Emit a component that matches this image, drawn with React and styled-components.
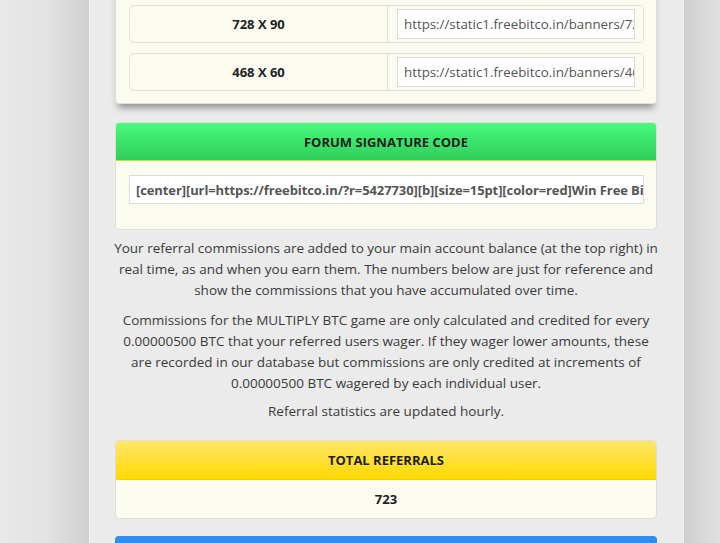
import React from "react";
import styled, { createGlobalStyle } from "styled-components";

const Global = createGlobalStyle`
  html, body { margin: 0; padding: 0; height: 100%; }
  body {
    font-family: "Open Sans", "Liberation Sans", sans-serif;
    background: linear-gradient(to right, #e9e9e9 0px, #e2e2e2 50px, #cfcfcf 89px, #cfcfcf 684px, #d2d2d2 690px, #e0e0e0 720px);
    overflow: hidden;
  }
`;

const Page = styled.div`
  display: flex;
  padding-left: 89px;
  height: 543px;
`;

const Column = styled.main`
  width: 595px;
  flex-shrink: 0;
  box-sizing: border-box;
  padding: 0 26px 0 25px;
  background: #ebebeb;
  border-left: 1px solid #f2f2f2;
  border-right: 1px solid #f0f0f0;
  display: flex;
  flex-direction: column;
  overflow: hidden;
  & > * { flex-shrink: 0; }
`;

const Card = styled.section`
  background: #fcfbef;
  border: 1px solid #e2e0d2;
  border-radius: 4px;
  box-sizing: border-box;
  overflow: hidden;
  margin-top: ${(p) => p.$mt || 0}px;
  box-shadow: ${(p) => (p.$deep ? "0 7px 7px -3px rgba(0,0,0,0.38)" : "none")};
`;

const BannerList = styled.div`
  display: flex;
  flex-direction: column;
  gap: 10px;
  padding: 24px 12px 12px 13px;
`;

const BannerRow = styled.div`
  display: grid;
  grid-template-columns: 258px minmax(0, 1fr);
  height: 38px;
  border: 1px solid #e3e1d3;
  border-radius: 4px;
  box-sizing: border-box;
`;

const SizeCell = styled.div`
  display: flex;
  align-items: center;
  justify-content: center;
  font-weight: 700;
  font-size: 13px;
  color: #222;
  border-right: 1px solid #e3e1d3;
`;

const UrlCell = styled.div`
  display: flex;
  align-items: center;
  min-width: 0;
  padding: 0 8px 0 9px;
`;

const Field = styled.div`
  flex: 1;
  min-width: 0;
  height: ${(p) => p.$h || 30}px;
  box-sizing: border-box;
  background: #fff;
  border: 1px solid #dcdcdc;
  display: flex;
  align-items: center;
  padding: 0 6px;
  font-size: ${(p) => (p.$bold ? 13 : 13.3)}px;
  font-weight: ${(p) => (p.$bold ? 700 : 400)};
  letter-spacing: ${(p) => (p.$bold ? "-0.1px" : "0")};
  color: #555;
  white-space: nowrap;
  overflow: hidden;
`;

const Header = styled.div`
  height: ${(p) => p.$h}px;
  display: flex;
  align-items: center;
  justify-content: center;
  font-weight: 700;
  font-size: 13px;
  color: #1e1e1e;
  background: ${(p) => p.$bg};
  border-bottom: 1px solid ${(p) => p.$line};
`;

const SigBody = styled.div`
  padding: 14px 12px 25px 13px;
  display: flex;
`;

const Value = styled.div`
  height: 38px;
  display: flex;
  align-items: center;
  justify-content: center;
  font-weight: 700;
  font-size: 13px;
  color: #222;
`;

const Text = styled.p`
  margin: ${(p) => p.$mt}px -1px 0 -1px;
  font-size: 13.5px;
  line-height: 21px;
  color: #3a3a3a;
  text-align: center;
`;

const BlueBar = styled.div`
  margin-top: 17px;
  height: 40px;
  background: #2f8ef0;
  border-radius: 4px 4px 0 0;
`;

export default function App() {
  return (
    <>
      <Global />
      <Page>
        <Column>
          <Card $mt={-20} $deep>
            <BannerList>
              <BannerRow>
                <SizeCell>728 X 90</SizeCell>
                <UrlCell>
                  <Field>https://static1.freebitco.in/banners/728x90.png</Field>
                </UrlCell>
              </BannerRow>
              <BannerRow>
                <SizeCell>468 X 60</SizeCell>
                <UrlCell>
                  <Field>https://static1.freebitco.in/banners/468x60.png</Field>
                </UrlCell>
              </BannerRow>
            </BannerList>
          </Card>

          <Card $mt={18}>
            <Header $h={37} $bg="linear-gradient(#48fa7f, #2fce5a)" $line="#c4e23a">
              FORUM SIGNATURE CODE
            </Header>
            <SigBody>
              <Field $bold $h={29}>
                [center][url=https://freebitco.in/?r=5427730][b][size=15pt][color=red]Win Free Bitcoins every hour![/color][/size][/b][/url][/center]
              </Field>
            </SigBody>
          </Card>

          <Text $mt={8}>
            Your referral commissions are added to your main account balance (at the top right) in real time, as and when you earn them. The numbers below are just for reference and show the commissions that you have accumulated over time.
          </Text>
          <Text $mt={9}>
            Commissions for the MULTIPLY BTC game are only calculated and credited for every 0.00000500 BTC that your referred users wager. If they wager lower amounts, these are recorded in our database but commissions are only credited at increments of 0.00000500 BTC wagered by each individual user.
          </Text>
          <Text $mt={7}>Referral statistics are updated hourly.</Text>

          <Card $mt={18}>
            <Header $h={38} $bg="linear-gradient(#ffe76a, #ffd900)" $line="#f2d200">
              TOTAL REFERRALS
            </Header>
            <Value>723</Value>
          </Card>

          <BlueBar />
        </Column>
      </Page>
    </>
  );
}
